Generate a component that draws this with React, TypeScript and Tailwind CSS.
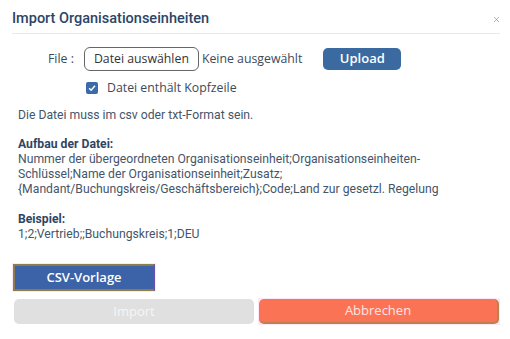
import { X } from "lucide-react";

const BODY = "font-['Roboto',sans-serif] text-[12.2px] leading-[15px] text-[#45566a]";

export default function App() {
  return (
    <div className="w-[510px] h-[339px] bg-white relative overflow-hidden">
      <div className="flex items-center justify-between pl-3 pr-[9px] pt-[9px] pb-[4px]">
        <h1 className="font-['Roboto',sans-serif] font-medium text-[14.5px] leading-[20px] text-[#2b4566]">
          Import Organisationseinheiten
        </h1>
        <X className="w-[9px] h-[9px] text-[#777]" strokeWidth={1.5} />
      </div>
      <div className="ml-3 mr-[10px] h-px bg-[#e8e8e8]" />

      <div className="pl-[48px] pt-[13px] flex items-center font-['Open_Sans',sans-serif] text-[12.3px] text-[#3c4a5a]">
        <span className="mr-[10px]">File :</span>
        <span className="h-[24px] px-[9px] flex items-center border border-[#666] rounded-[6px] text-[#333]">
          Datei auswählen
        </span>
        <span className="ml-[3px]">Keine ausgewählt</span>
        <button className="ml-[21px] w-[78px] h-[22px] rounded-[5px] bg-[#3a6aa0] text-white font-semibold text-[13px]">
          Upload
        </button>
      </div>

      <div className="pl-[86px] pt-[8px] flex items-center font-['Open_Sans',sans-serif] text-[12.3px] leading-[18px] text-[#3c4a5a]">
        <span className="w-[12px] h-[12px] rounded-[2px] bg-[#3a6aa8] flex items-center justify-center">
          <svg viewBox="0 0 12 12" className="w-[10px] h-[10px]">
            <path d="M2.5 6.2 L5 8.6 L9.6 3.4" fill="none" stroke="white" strokeWidth="1.8" />
          </svg>
        </span>
        <span className="ml-[9px]">Datei enthält Kopfzeile</span>
      </div>

      <div className={`${BODY} pl-[18px] pt-[11px]`}>
        <p>Die Datei muss im csv oder txt-Format sein.</p>
        <p className="mt-[14px] font-bold text-[#2f4563]">Aufbau der Datei:</p>
        <p>
          Nummer der übergeordneten Organisationseinheit;Organisationseinheiten-
          <br />
          Schlüssel;Name der Organisationseinheit;Zusatz;
          <br />
          {"{Mandant/Buchungskreis/Geschäftsbereich};Code;Land zur gesetzl. Regelung"}
        </p>
        <p className="mt-[15px] font-bold text-[#2f4563]">Beispiel:</p>
        <p>1;2;Vertrieb;;Buchungskreis;1;DEU</p>
      </div>

      <div className="pl-[12px] pt-[21px] flex">
        <div className="p-[1px] bg-[#fde8fb]">
          <button className="w-[142px] h-[27px] bg-[#3c63a8] border-2 border-[#8c7d4e] border-r-[#6b4fb0] text-white font-['Open_Sans',sans-serif] font-semibold text-[13px]">
            CSV-Vorlage
          </button>
        </div>
      </div>

      <div className="pl-[14px] pr-[10px] pt-[7px] flex gap-[4px] font-['Open_Sans',sans-serif] text-[13px]">
        <button className="flex-1 h-[25px] rounded-[5px] bg-[#e0e0e0] text-[#f6f6f6]">
          Import
        </button>
        <div className="flex-1 p-[1px] bg-[#fde8fb] -mt-[1px]">
          <button className="w-full h-[25px] rounded-[5px] bg-[#fa7355] border-b-2 border-r-2 border-[#b98252] text-[#ffe4e4]">
            Abbrechen
          </button>
        </div>
      </div>
    </div>
  );
}
